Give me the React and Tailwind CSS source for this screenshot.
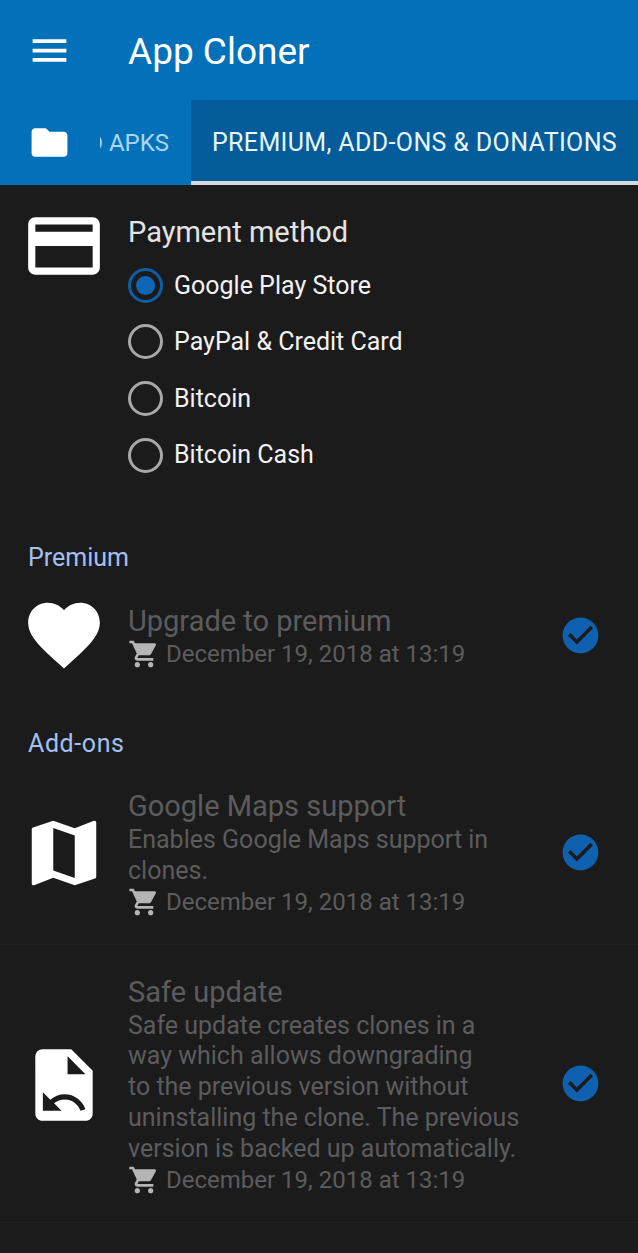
import React from "react";

const FONT = "font-['Roboto','Liberation_Sans',sans-serif]";

const CART =
  "M7 18c-1.1 0-1.99.9-1.99 2S5.9 22 7 22s2-.9 2-2-.9-2-2-2zM1 2v2h2l3.6 7.59-1.35 2.45c-.16.28-.25.61-.25.96 0 1.1.9 2 2 2h12v-2H7.42c-.14 0-.25-.11-.25-.25l.03-.12.9-1.63h7.45c.75 0 1.41-.41 1.75-1.03l3.58-6.49c.08-.14.12-.31.12-.48 0-.55-.45-1-1-1H5.21l-.94-2H1zm16 16c-1.1 0-1.99.9-1.99 2s.89 2 1.99 2 2-.9 2-2-.9-2-2-2z";
const CHECK =
  "M12 2C6.48 2 2 6.48 2 12s4.48 10 10 10 10-4.48 10-10S17.52 2 12 2zm-2 15l-5-5 1.41-1.41L10 14.17l7.59-7.59L19 8l-9 9z";

function Icon({ d, className }) {
  return (
    <svg viewBox="0 0 24 24" className={className} fill="currentColor">
      <path d={d} />
    </svg>
  );
}

function Radio({ label, checked }) {
  return (
    <div className="flex h-[56.6px] items-center">
      <div
        className={`flex h-[35px] w-[35px] items-center justify-center rounded-full border-[3px] ${
          checked ? "border-[#0d5ea6]" : "border-[#a8a8a8]"
        }`}
      >
        {checked && <div className="h-[19px] w-[19px] rounded-full bg-[#0f66b5]" />}
      </div>
      <span className="ml-[11px] text-[25px] text-[#f2f2f2]">{label}</span>
    </div>
  );
}

function DateLine() {
  return (
    <div className="flex h-[31px] items-center">
      <Icon d={CART} className="h-[32px] w-[32px] text-[#b5b5b5]" />
      <span className="ml-[6px] text-[24px] text-[#5c5c5c]">December 19, 2018 at 13:19</span>
    </div>
  );
}

function AddonRow({ icon, title, desc, className }) {
  return (
    <div className={`flex items-center ${className}`}>
      <div className="w-[128px] pl-[21px]">{icon}</div>
      <div className="w-[400px]">
        <div className={`text-[29px] text-[#5c5c5c] ${desc.length ? "leading-[37px]" : "leading-[34px]"}`}>
          {title}
        </div>
        {desc.map((line) => (
          <div key={line} className="text-[25px] leading-[30.7px] text-[#5c5c5c]">
            {line}
          </div>
        ))}
        <DateLine />
      </div>
      <Icon d={CHECK} className="mb-[2px] ml-[31px] h-[43px] w-[43px] text-[#0f60ae]" />
    </div>
  );
}

export default function App() {
  return (
    <div className={`h-[1253px] w-[638px] overflow-hidden bg-[#1b1b1c] ${FONT}`}>
      <div className="flex h-[100px] items-center bg-[#0271b9]">
        <Icon
          d="M3 18h18v-2H3v2zm0-5h18v-2H3v2zm0-7v2h18V6H3z"
          className="ml-[27px] h-[45px] w-[45px] text-white"
        />
        <span className="ml-[56px] mt-[3px] text-[37px] text-white">App Cloner</span>
      </div>

      <div className="flex h-[85px] bg-[#0271b9]">
        <div className="flex w-[191px] items-center overflow-hidden">
          <Icon
            d="M10 4H4c-1.1 0-1.99.9-1.99 2L2 18c0 1.1.9 2 2 2h16c1.1 0 2-.9 2-2V8c0-1.1-.9-2-2-2h-8l-2-2z"
            className="ml-[28px] h-[43px] w-[43px] shrink-0 text-white"
          />
          <div className="ml-[29px] flex w-[69px] shrink-0 justify-end overflow-hidden whitespace-nowrap text-[24px] text-[#a9d6f3]">
            D APKS
          </div>
        </div>
        <div className="flex flex-1 items-center justify-center border-b-[4px] border-[#d8d8d8] bg-[#045c9a] pt-[4px] text-[25px] tracking-[0.36px] whitespace-nowrap text-[#eaf6fd]">
          PREMIUM, ADD-ONS &amp; DONATIONS
        </div>
      </div>

      <div className="flex pt-[28px]">
        <div className="w-[128px] pl-[21px]">
          <Icon
            d="M20 4H4c-1.11 0-1.99.89-1.99 2L2 18c0 1.11.89 2 2 2h16c1.11 0 2-.89 2-2V6c0-1.11-.89-2-2-2zm0 14H4v-6h16v6zm0-10H4V6h16v2z"
            className="mt-[-10px] h-[86px] w-[86px] text-white"
          />
        </div>
        <div>
          <div className="mb-[6px] text-[29px] leading-[38px] text-[#e4e4e4]">Payment method</div>
          <Radio label="Google Play Store" checked />
          <Radio label="PayPal & Credit Card" />
          <Radio label="Bitcoin" />
          <Radio label="Bitcoin Cash" />
        </div>
      </div>

      <div className="mt-[58px] pl-[28px] text-[25px] leading-[34px] text-[#a4c0f2]">Premium</div>

      <AddonRow
        className="mt-[17px]"
        icon={
          <Icon
            d="M12 21.35l-1.45-1.32C5.4 15.36 2 12.28 2 8.5 2 5.42 4.42 3 7.5 3c1.74 0 3.41.81 4.5 2.09C13.09 3.81 14.76 3 16.5 3 19.58 3 22 5.42 22 8.5c0 3.78-3.4 6.86-8.55 11.54L12 21.35z"
            className="mb-[3px] h-[86px] w-[86px] text-white"
          />
        }
        title="Upgrade to premium"
        desc={[]}
      />

      <div className="mt-[46px] pl-[28px] text-[25px] leading-[34px] tracking-[0.6px] text-[#a4c0f2]">Add-ons</div>

      <AddonRow
        className="mt-[27px] border-b border-[#212122] pb-[26px]"
        icon={
          <Icon
            d="M20.5 3l-.16.03L15 5.1 9 3 3.36 4.9c-.21.07-.36.25-.36.48V20.5c0 .28.22.5.5.5l.16-.03L9 18.9l6 2.1 5.64-1.9c.21-.07.36-.25.36-.48V3.5c0-.28-.22-.5-.5-.5zM15 19l-6-2.11V5l6 2.11V19z"
            className="h-[86px] w-[86px] text-white"
          />
        }
        title="Google Maps support"
        desc={["Enables Google Maps support in", "clones."]}
      />

      <AddonRow
        className="border-b border-[#212122] pt-[29px] pb-[27px]"
        icon={
          <svg viewBox="0 0 24 24" className="h-[86px] w-[86px]">
            <path
              fill="#ffffff"
              d="M6 2h8l6 6v12c0 1.1-.9 2-2 2H6c-1.1 0-2-.9-2-2V4c0-1.1.9-2 2-2z"
            />
            <path fill="#1b1b1c" d="M13 4v5h5z" />
            <path
              fill="#1b1b1c"
              transform="translate(4.94 9.94) scale(0.58)"
              d="M12.5 8c-2.65 0-5.05.99-6.9 2.6L2 7v9h9l-3.62-3.62c1.39-1.16 3.16-1.88 5.12-1.88 3.54 0 6.55 2.31 7.6 5.5l2.37-.78C21.08 11.03 17.15 8 12.5 8z"
            />
          </svg>
        }
        title="Safe update"
        desc={[
          "Safe update creates clones in a",
          "way which allows downgrading",
          "to the previous version without",
          "uninstalling the clone. The previous",
          "version is backed up automatically.",
        ]}
      />
    </div>
  );
}
